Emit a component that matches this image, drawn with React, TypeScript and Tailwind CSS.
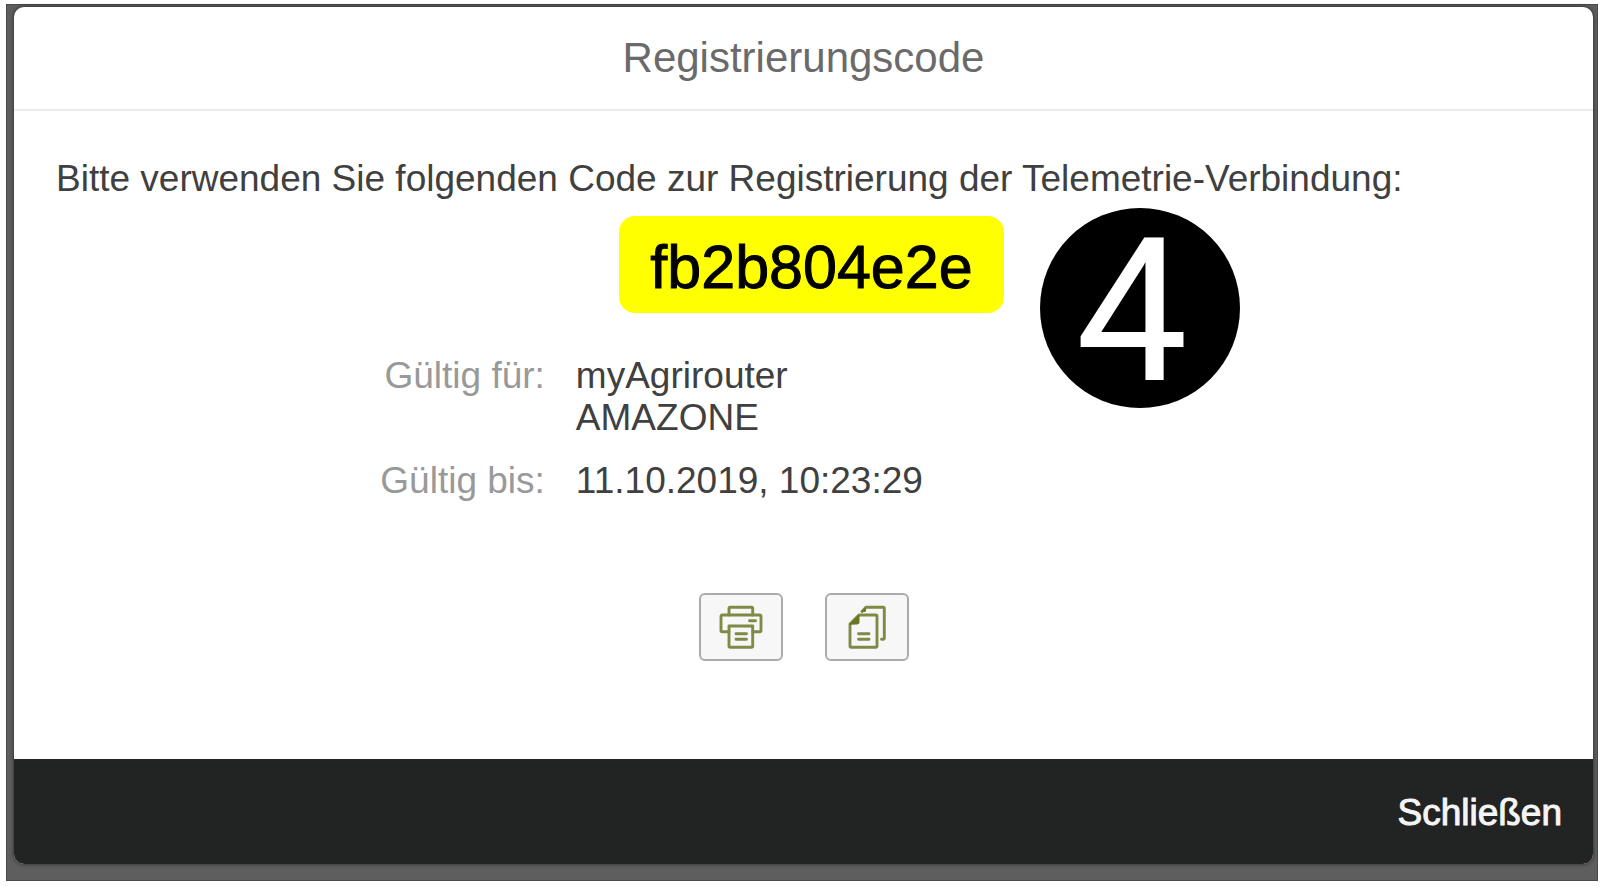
import React from 'react';

function PrintIcon() {
  return (
    <svg viewBox="0 0 44 44" className="size-11" fill="none" stroke="#7f8a45" strokeWidth="2.9" strokeLinejoin="round" strokeLinecap="round" aria-hidden="true">
      <path d="M10 10V3.5Q10 2.3 11.2 2.3H32.5Q33.7 2.3 33.7 3.5V10" />
      <path d="M10 26.7H3.2Q2 26.7 2 25.5V11.5Q2 10 3.5 10H40.5Q42 10 42 11.5V25.5Q42 26.7 40.8 26.7H33.7" />
      <path d="M10 21H33.7V41Q33.7 42.3 32.4 42.3H11.3Q10 42.3 10 41Z" />
      <path d="M30.5 15.8H36.5M17 28.7H27.5M17 34.3H27.5" />
    </svg>
  );
}

function CopyIcon() {
  return (
    <svg viewBox="0 0 44 44" className="size-11" fill="none" stroke="#7f8a45" strokeWidth="2.9" strokeLinejoin="round" strokeLinecap="round" aria-hidden="true">
      <path d="M14 10H30.8Q32 10 32 11.2V41Q32 42.3 30.8 42.3H6.2Q5 42.3 5 41V19Z" />
      <path d="M5 19L14 10V17.5Q14 19 12.5 19Z" fill="#6a7626" stroke="#6a7626" strokeWidth="1" />
      <path d="M17 6.5L21 2.3H38.2Q39.3 2.3 39.3 3.5V33Q39.3 34.3 38 34.3H36.5" />
      <path d="M16 7L21 2V5.5Q21 7 19.5 7Z" fill="#6a7626" stroke="none" />
      <path d="M13.5 28.7H24M13.5 34.3H24" />
    </svg>
  );
}

function ToolButton({ label, children }: { label: string; children: React.ReactNode }) {
  return (
    <button
      type="button"
      aria-label={label}
      className="flex h-[68px] w-[84px] items-center justify-center rounded-md border-2 border-[#ababab] bg-[#f7f7f7]"
    >
      {children}
    </button>
  );
}

export default function App() {
  return (
    <div className="bg-white pt-1 pr-[2px] pb-1 pl-1.5 font-['Liberation_Sans',Arial,sans-serif]">
      <div className="border border-[#4a4a4a] bg-[#5e5e5e] pt-[2px] pr-1 pb-4 pl-[7px]">
        <section
          role="dialog"
          aria-labelledby="dialog-title"
          className="overflow-hidden rounded-[10px] bg-white shadow-[0_0_4px_rgba(0,0,0,0.6)]"
        >
          <header className="border-b-2 border-[#ebebeb] py-[25px] text-center">
            <h1 id="dialog-title" className="text-[42px] leading-[52px] text-[#6a6a6a]">
              Registrierungscode
            </h1>
          </header>

          <main className="pt-[47px] pb-[98px] text-[37px] leading-[42px] text-[#404040]">
            <p className="px-[42px]">Bitte verwenden Sie folgenden Code zur Registrierung der Telemetrie-Verbindung:</p>

            <div className="mt-4 flex justify-center pl-4">
              <div className="relative">
                <output className="block rounded-2xl bg-[#ffff00] px-[31px] pt-[19px] pb-[13px] text-[61px] leading-[65px] text-black [-webkit-text-stroke:1px_#000000]">
                  fb2b804e2e
                </output>
                <span className="absolute -top-2 left-full ml-9 flex size-[200px] items-center justify-center rounded-full bg-black pt-2 pr-4 font-[Roboto,sans-serif] text-[200px] leading-[200px] text-white">
                  4
                </span>
              </div>
            </div>

            <dl className="mt-[42px] grid grid-cols-[34%_1fr] gap-x-[25px] gap-y-[21px]">
              <dt className="pr-1.5 text-right text-[#999999]">Gültig für:</dt>
              <dd>
                myAgrirouter
                <br />
                AMAZONE
              </dd>
              <dt className="pr-1.5 text-right text-[#999999]">Gültig bis:</dt>
              <dd>11.10.2019, 10:23:29</dd>
            </dl>

            <div className="mt-[91px] flex justify-center gap-[42px]">
              <ToolButton label="Drucken">
                <PrintIcon />
              </ToolButton>
              <ToolButton label="Kopieren">
                <CopyIcon />
              </ToolButton>
            </div>
          </main>

          <footer className="flex justify-end bg-[#222423] px-[31px] pt-[33px] pb-[30px]">
            <button type="button" className="text-[37px] leading-[42px] text-[#f5f5f5] [-webkit-text-stroke:1px_#f5f5f5]">
              Schließen
            </button>
          </footer>
        </section>
      </div>
    </div>
  );
}
